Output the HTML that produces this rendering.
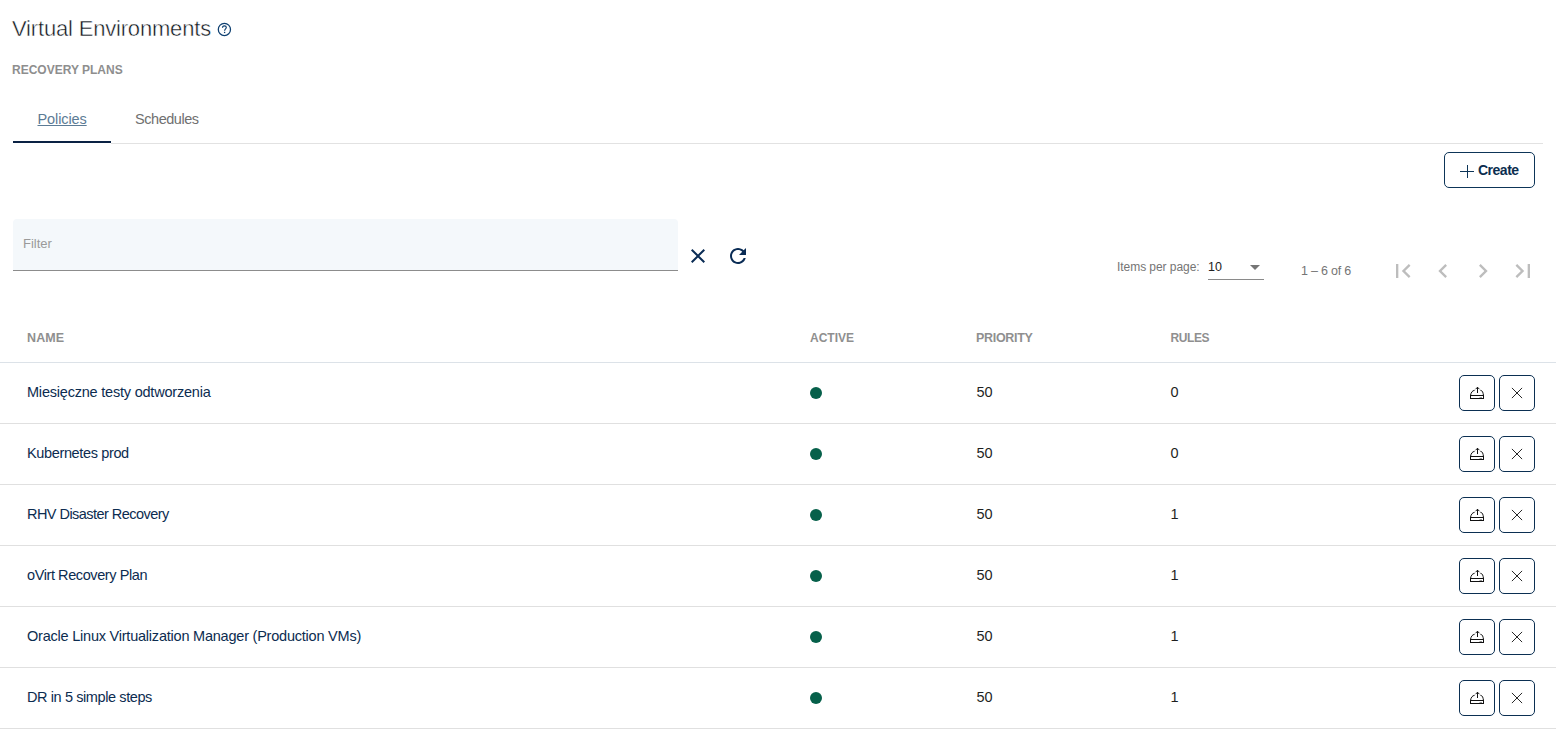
<!DOCTYPE html>
<html>
<head>
<meta charset="utf-8">
<style>
html,body{margin:0;padding:0;background:#fff;}
body{width:1556px;height:748px;overflow:hidden;position:relative;font-family:"Liberation Sans", sans-serif;}
.a{position:absolute;white-space:nowrap;}
.t{line-height:1;}
.hl{left:0;width:1556px;height:1px;background:#e0e0e0;}
.dot{left:810px;width:12px;height:12px;border-radius:50%;background:#06604a;}
.btn{width:34px;height:34px;border:1px solid #0b2f52;border-radius:5px;}
svg{position:absolute;display:block;}
</style>
</head>
<body>
<div class="a t" style="left:12px;top:18.38px;font-size:22px;color:#0e141a;letter-spacing:-0.18px;-webkit-text-stroke:0.45px #fff;">Virtual Environments</div>
<svg style="left:216px;top:21px" width="17" height="17" viewBox="0 0 17 17"><circle cx="8.4" cy="8.4" r="6.1" fill="none" stroke="#0d3f70" stroke-width="1.25"/><path d="M6.5 6.8C6.5 5.6 7.3 4.9 8.4 4.9S10.3 5.6 10.3 6.6C10.3 7.9 8.6 8 8.6 9.8" fill="none" stroke="#0d3f70" stroke-width="1.2"/><rect x="7.95" y="10.8" width="1.3" height="1.3" fill="#0d3f70"/></svg>
<div class="a t" style="left:12px;top:63.84px;font-size:12px;color:#8e8e8e;font-weight:700;">RECOVERY PLANS</div>
<div class="a t" style="left:37.5px;top:111.73px;font-size:14.5px;color:#5c7b95;letter-spacing:-0.1px;text-decoration:underline;">Policies</div>
<div class="a t" style="left:135px;top:111.73px;font-size:14.5px;color:#707070;letter-spacing:-0.45px;">Schedules</div>
<div class="a" style="left:13px;top:141px;width:98px;height:2px;background:#0a2244"></div>
<div class="a" style="left:111px;top:143px;width:1432px;height:1px;background:#e2e2e2"></div>
<div class="a" style="left:1444px;top:152px;width:89px;height:34px;border:1px solid #0d3558;border-radius:5px"></div>
<div class="a" style="left:1467px;top:165px;width:1px;height:13px;background:#0d3558"></div><div class="a" style="left:1460px;top:171px;width:14px;height:1px;background:#0d3558"></div>
<div class="a t" style="left:1478px;top:163.15px;font-size:14px;color:#0b2d4f;font-weight:700;letter-spacing:-0.5px;">Create</div>
<div class="a" style="left:13px;top:219px;width:665px;height:51px;background:#f4f8fb;border-radius:4px 4px 0 0;border-bottom:1px solid #8c8c8c"></div>
<div class="a t" style="left:23px;top:237.00px;font-size:13px;color:#9a9a9a;">Filter</div>
<svg style="left:686px;top:244px" width="24" height="24" viewBox="0 0 24 24"><path fill="#0a2c55" d="M19 6.41L17.59 5 12 10.59 6.41 5 5 6.41 10.59 12 5 17.59 6.41 19 12 13.41 17.59 19 19 17.59 13.41 12z"/></svg>
<svg style="left:726px;top:244px" width="24" height="24" viewBox="0 0 24 24"><path fill="#0a2c55" d="M17.65 6.35C16.2 4.9 14.21 4 12 4c-4.42 0-7.99 3.58-7.99 8s3.57 8 7.99 8c3.73 0 6.84-2.55 7.73-6h-2.08c-.82 2.33-3.04 4-5.65 4-3.31 0-6-2.690-6-6s2.69-6 6-6c1.66 0 3.14.69 4.22 1.78L13 11h7V4l-2.35 2.35z"/></svg>
<div class="a t" style="left:1117px;top:260.84px;font-size:12px;color:#757575;letter-spacing:-0.05px;">Items per page:</div>
<div class="a t" style="left:1208px;top:261.42px;font-size:12.5px;color:#222;">10</div>
<svg style="left:1250px;top:265px" width="10" height="5" viewBox="0 0 10 5"><path d="M0 0h10L5 5z" fill="#757575"/></svg>
<div class="a" style="left:1208px;top:279px;width:56px;height:1px;background:#8a8a8a"></div>
<div class="a t" style="left:1301px;top:265.42px;font-size:12.5px;color:#757575;letter-spacing:-0.2px;">1 – 6 of 6</div>
<svg style="left:1389px;top:257px" width="28" height="28" viewBox="0 0 24 24"><path fill="#bdbdbd" d="M18.41 16.59L13.82 12l4.59-4.59L17 6l-6 6 6 6zM6 6h2v12H6z"/></svg>
<svg style="left:1429px;top:257px" width="28" height="28" viewBox="0 0 24 24"><path fill="#bdbdbd" d="M15.41 7.41L14 6l-6 6 6 6 1.41-1.41L10.83 12z"/></svg>
<svg style="left:1469px;top:257px" width="28" height="28" viewBox="0 0 24 24"><path fill="#bdbdbd" d="M10 6L8.59 7.41 13.17 12l-4.58 4.59L10 18l6-6z"/></svg>
<svg style="left:1509px;top:257px" width="28" height="28" viewBox="0 0 24 24"><path fill="#bdbdbd" d="M5.59 7.41L10.18 12l-4.59 4.59L7 18l6-6-6-6zM16 6h2v12h-2z"/></svg>
<div class="a t" style="left:27px;top:332.42px;font-size:12.5px;color:#8f8f8f;font-weight:700;letter-spacing:0.1px;">NAME</div>
<div class="a t" style="left:810px;top:331.84px;font-size:12px;color:#8f8f8f;font-weight:700;">ACTIVE</div>
<div class="a t" style="left:976px;top:332.42px;font-size:12.5px;color:#8f8f8f;font-weight:700;letter-spacing:-0.3px;">PRIORITY</div>
<div class="a t" style="left:1170.5px;top:331.84px;font-size:12px;color:#8f8f8f;font-weight:700;letter-spacing:-0.4px;">RULES</div>
<div class="a hl" style="top:362px;background:#dce2e8"></div>
<div class="a t" style="left:27px;top:384.73px;font-size:14.5px;color:#0c2c50;letter-spacing:-0.21px;">Miesięczne testy odtworzenia</div>
<div class="a dot" style="top:387px"></div>
<div class="a t" style="left:976.5px;top:384.73px;font-size:14.5px;color:#1f1f1f;">50</div>
<div class="a t" style="left:1170.5px;top:384.73px;font-size:14.5px;color:#1f1f1f;">0</div>
<div class="a btn" style="left:1459px;top:375px"></div>
<div class="a btn" style="left:1499px;top:375px"></div>
<svg style="left:1466px;top:383px" width="22" height="18" viewBox="0 0 22 18"><g fill="none" stroke="#111" stroke-width="1"><path d="M11.5 4.2V10"/><path d="M9.6 6.2L11.5 4.2 13.4 6.2"/><path d="M8.6 7.3C6.3 7.6 5 9.5 4.5 12.5"/><path d="M14.4 7.3C16.7 7.6 17 9.5 17.5 12.5"/><rect x="4.5" y="12.5" width="13" height="3"/></g><path d="M13.5 14.5H16" stroke="#999" stroke-width="1"/></svg>
<svg style="left:1511px;top:387px" width="12" height="12" viewBox="0 0 12 12"><path d="M0.9 0.9L11.1 11.1M11.1 0.9L0.9 11.1" stroke="#000" stroke-width="0.85" fill="none"/></svg>
<div class="a hl" style="top:423px"></div>
<div class="a t" style="left:27px;top:445.73px;font-size:14.5px;color:#0c2c50;letter-spacing:-0.36px;">Kubernetes prod</div>
<div class="a dot" style="top:448px"></div>
<div class="a t" style="left:976.5px;top:445.73px;font-size:14.5px;color:#1f1f1f;">50</div>
<div class="a t" style="left:1170.5px;top:445.73px;font-size:14.5px;color:#1f1f1f;">0</div>
<div class="a btn" style="left:1459px;top:436px"></div>
<div class="a btn" style="left:1499px;top:436px"></div>
<svg style="left:1466px;top:444px" width="22" height="18" viewBox="0 0 22 18"><g fill="none" stroke="#111" stroke-width="1"><path d="M11.5 4.2V10"/><path d="M9.6 6.2L11.5 4.2 13.4 6.2"/><path d="M8.6 7.3C6.3 7.6 5 9.5 4.5 12.5"/><path d="M14.4 7.3C16.7 7.6 17 9.5 17.5 12.5"/><rect x="4.5" y="12.5" width="13" height="3"/></g><path d="M13.5 14.5H16" stroke="#999" stroke-width="1"/></svg>
<svg style="left:1511px;top:448px" width="12" height="12" viewBox="0 0 12 12"><path d="M0.9 0.9L11.1 11.1M11.1 0.9L0.9 11.1" stroke="#000" stroke-width="0.85" fill="none"/></svg>
<div class="a hl" style="top:484px"></div>
<div class="a t" style="left:27px;top:506.73px;font-size:14.5px;color:#0c2c50;letter-spacing:-0.54px;">RHV Disaster Recovery</div>
<div class="a dot" style="top:509px"></div>
<div class="a t" style="left:976.5px;top:506.73px;font-size:14.5px;color:#1f1f1f;">50</div>
<div class="a t" style="left:1170.5px;top:506.73px;font-size:14.5px;color:#1f1f1f;">1</div>
<div class="a btn" style="left:1459px;top:497px"></div>
<div class="a btn" style="left:1499px;top:497px"></div>
<svg style="left:1466px;top:505px" width="22" height="18" viewBox="0 0 22 18"><g fill="none" stroke="#111" stroke-width="1"><path d="M11.5 4.2V10"/><path d="M9.6 6.2L11.5 4.2 13.4 6.2"/><path d="M8.6 7.3C6.3 7.6 5 9.5 4.5 12.5"/><path d="M14.4 7.3C16.7 7.6 17 9.5 17.5 12.5"/><rect x="4.5" y="12.5" width="13" height="3"/></g><path d="M13.5 14.5H16" stroke="#999" stroke-width="1"/></svg>
<svg style="left:1511px;top:509px" width="12" height="12" viewBox="0 0 12 12"><path d="M0.9 0.9L11.1 11.1M11.1 0.9L0.9 11.1" stroke="#000" stroke-width="0.85" fill="none"/></svg>
<div class="a hl" style="top:545px"></div>
<div class="a t" style="left:27px;top:567.73px;font-size:14.5px;color:#0c2c50;letter-spacing:-0.41px;">oVirt Recovery Plan</div>
<div class="a dot" style="top:570px"></div>
<div class="a t" style="left:976.5px;top:567.73px;font-size:14.5px;color:#1f1f1f;">50</div>
<div class="a t" style="left:1170.5px;top:567.73px;font-size:14.5px;color:#1f1f1f;">1</div>
<div class="a btn" style="left:1459px;top:558px"></div>
<div class="a btn" style="left:1499px;top:558px"></div>
<svg style="left:1466px;top:566px" width="22" height="18" viewBox="0 0 22 18"><g fill="none" stroke="#111" stroke-width="1"><path d="M11.5 4.2V10"/><path d="M9.6 6.2L11.5 4.2 13.4 6.2"/><path d="M8.6 7.3C6.3 7.6 5 9.5 4.5 12.5"/><path d="M14.4 7.3C16.7 7.6 17 9.5 17.5 12.5"/><rect x="4.5" y="12.5" width="13" height="3"/></g><path d="M13.5 14.5H16" stroke="#999" stroke-width="1"/></svg>
<svg style="left:1511px;top:570px" width="12" height="12" viewBox="0 0 12 12"><path d="M0.9 0.9L11.1 11.1M11.1 0.9L0.9 11.1" stroke="#000" stroke-width="0.85" fill="none"/></svg>
<div class="a hl" style="top:606px"></div>
<div class="a t" style="left:27px;top:628.73px;font-size:14.5px;color:#0c2c50;letter-spacing:-0.22px;">Oracle Linux Virtualization Manager (Production VMs)</div>
<div class="a dot" style="top:631px"></div>
<div class="a t" style="left:976.5px;top:628.73px;font-size:14.5px;color:#1f1f1f;">50</div>
<div class="a t" style="left:1170.5px;top:628.73px;font-size:14.5px;color:#1f1f1f;">1</div>
<div class="a btn" style="left:1459px;top:619px"></div>
<div class="a btn" style="left:1499px;top:619px"></div>
<svg style="left:1466px;top:627px" width="22" height="18" viewBox="0 0 22 18"><g fill="none" stroke="#111" stroke-width="1"><path d="M11.5 4.2V10"/><path d="M9.6 6.2L11.5 4.2 13.4 6.2"/><path d="M8.6 7.3C6.3 7.6 5 9.5 4.5 12.5"/><path d="M14.4 7.3C16.7 7.6 17 9.5 17.5 12.5"/><rect x="4.5" y="12.5" width="13" height="3"/></g><path d="M13.5 14.5H16" stroke="#999" stroke-width="1"/></svg>
<svg style="left:1511px;top:631px" width="12" height="12" viewBox="0 0 12 12"><path d="M0.9 0.9L11.1 11.1M11.1 0.9L0.9 11.1" stroke="#000" stroke-width="0.85" fill="none"/></svg>
<div class="a hl" style="top:667px"></div>
<div class="a t" style="left:27px;top:689.73px;font-size:14.5px;color:#0c2c50;letter-spacing:-0.4px;">DR in 5 simple steps</div>
<div class="a dot" style="top:692px"></div>
<div class="a t" style="left:976.5px;top:689.73px;font-size:14.5px;color:#1f1f1f;">50</div>
<div class="a t" style="left:1170.5px;top:689.73px;font-size:14.5px;color:#1f1f1f;">1</div>
<div class="a btn" style="left:1459px;top:680px"></div>
<div class="a btn" style="left:1499px;top:680px"></div>
<svg style="left:1466px;top:688px" width="22" height="18" viewBox="0 0 22 18"><g fill="none" stroke="#111" stroke-width="1"><path d="M11.5 4.2V10"/><path d="M9.6 6.2L11.5 4.2 13.4 6.2"/><path d="M8.6 7.3C6.3 7.6 5 9.5 4.5 12.5"/><path d="M14.4 7.3C16.7 7.6 17 9.5 17.5 12.5"/><rect x="4.5" y="12.5" width="13" height="3"/></g><path d="M13.5 14.5H16" stroke="#999" stroke-width="1"/></svg>
<svg style="left:1511px;top:692px" width="12" height="12" viewBox="0 0 12 12"><path d="M0.9 0.9L11.1 11.1M11.1 0.9L0.9 11.1" stroke="#000" stroke-width="0.85" fill="none"/></svg>
<div class="a hl" style="top:728px"></div>
</body>
</html>
